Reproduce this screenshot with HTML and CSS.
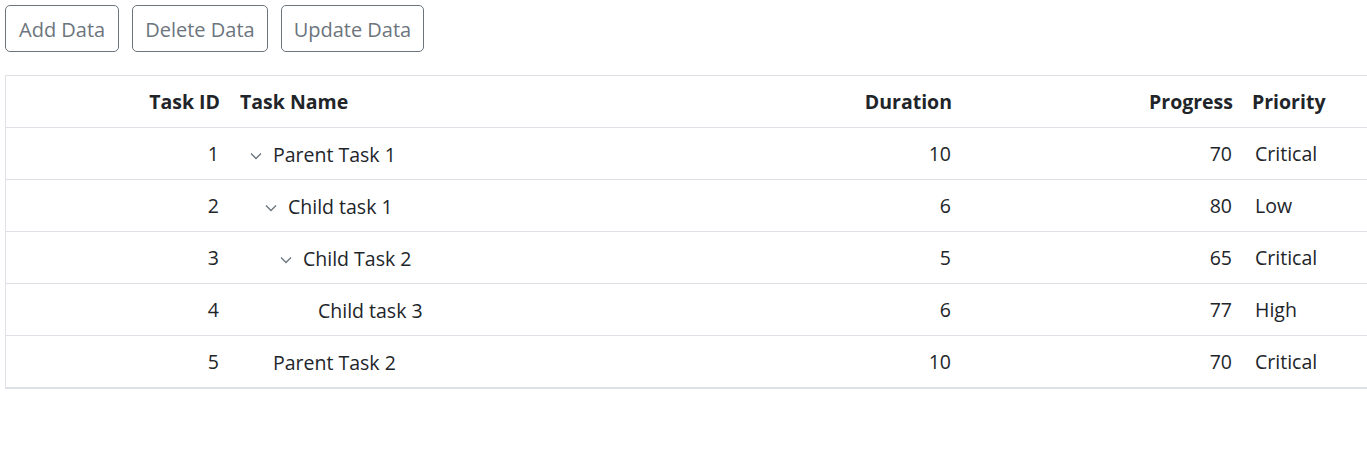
FILE: index.html
```html
<!DOCTYPE html>
<html lang="en">
<head>
  <meta charset="UTF-8" />
  <title>TreeGrid</title>
  <link rel="stylesheet" href="styles.css">
</head>
<body>

  <div class="toolbar">
    <button class="btn">Add Data</button>
    <button class="btn">Delete Data</button>
    <button class="btn">Update Data</button>
  </div>

  <div class="grid-wrap">
    <table class="treegrid">
      <colgroup>
        <col class="c-id">
        <col class="c-name">
        <col class="c-dur">
        <col class="c-prog">
        <col class="c-pri">
      </colgroup>
      <thead>
        <tr>
          <th class="num">Task ID</th>
          <th>Task Name</th>
          <th class="num">Duration</th>
          <th class="num">Progress</th>
          <th class="pri">Priority</th>
        </tr>
      </thead>
      <tbody id="rows"></tbody>
    </table>
  </div>

  <script>
    // id, name, level, expandable, duration, progress, priority
    const tasks = [
      [1, "Parent Task 1", 0, true, 10, 70, "Critical"],
      [2, "Child task 1", 1, true, 6, 80, "Low"],
      [3, "Child Task 2", 2, true, 5, 65, "Critical"],
      [4, "Child task 3", 3, false, 6, 77, "High"],
      [5, "Parent Task 2", 0, false, 10, 70, "Critical"]
    ];
    const chevron = '<svg class="chev" width="12" height="8" viewBox="0 0 12 8"><path d="M1 1.5 L6 6.5 L11 1.5" fill="none" stroke="#6c757d" stroke-width="1.3"/></svg>';
    const body = document.getElementById("rows");

    tasks.forEach(([id, name, level, open, dur, prog, pri]) => {
      const tr = document.createElement("tr");
      tr.innerHTML =
        `<td class="num">${id}</td>` +
        `<td><span class="tree" style="padding-left:${level * 15}px">` +
        `<span class="icon">${open ? chevron : ""}</span>${name}</span></td>` +
        `<td class="num">${dur}</td>` +
        `<td class="num">${prog}</td>` +
        `<td class="pri">${pri}</td>`;
      body.appendChild(tr);
    });
  </script>

</body>
</html>
```

FILE: styles.css
```css
body {
  margin: 0;
  padding: 5px;
  font-family: "Open Sans", "Noto Sans", sans-serif;
  color: #212529;
  background: #fff;
  overflow: hidden;
}

.toolbar {
  display: flex;
  gap: 13px;
}

.btn {
  font-family: inherit;
  font-size: 20px;
  color: #6c757d;
  background: #fff;
  border: 1px solid #6c757d;
  border-radius: 5px;
  height: 47px;
  padding: 1px 12px 0;
  cursor: pointer;
}

.btn:first-child {
  padding: 1px 13px 0;
}

.grid-wrap {
  margin-top: 23px;
  width: 1420px;
  border: 1px solid #dee2e6;
  border-bottom: 2px solid #dee2e6;
}

.treegrid {
  width: 100%;
  border-collapse: collapse;
  table-layout: fixed;
  font-size: 19.5px;
}

.c-id { width: 225px; }
.c-name { width: 450px; }
.c-dur { width: 282px; }
.c-prog { width: 281px; }

.treegrid th,
.treegrid td {
  height: 51px;
  padding: 0 10px;
  text-align: left;
  white-space: nowrap;
  border-top: 1px solid #dee2e6;
}

.treegrid thead th {
  border-top: none;
  font-weight: 700;
}

.treegrid th:nth-child(2) {
  padding-left: 9px;
}

.treegrid .num {
  text-align: right;
}

.treegrid th.num {
  padding-right: 11px;
}

.treegrid td.num {
  padding-right: 12px;
}

.treegrid th.pri {
  padding-left: 8px;
}

.treegrid td.pri {
  padding-left: 11px;
}

.tree {
  display: inline-block;
  padding-top: 1px;
}

.icon {
  display: inline-block;
  text-align: center;
  width: 24px;
  margin-left: 3px;
  margin-right: 5px;
}

.chev {
  vertical-align: middle;
}
```
